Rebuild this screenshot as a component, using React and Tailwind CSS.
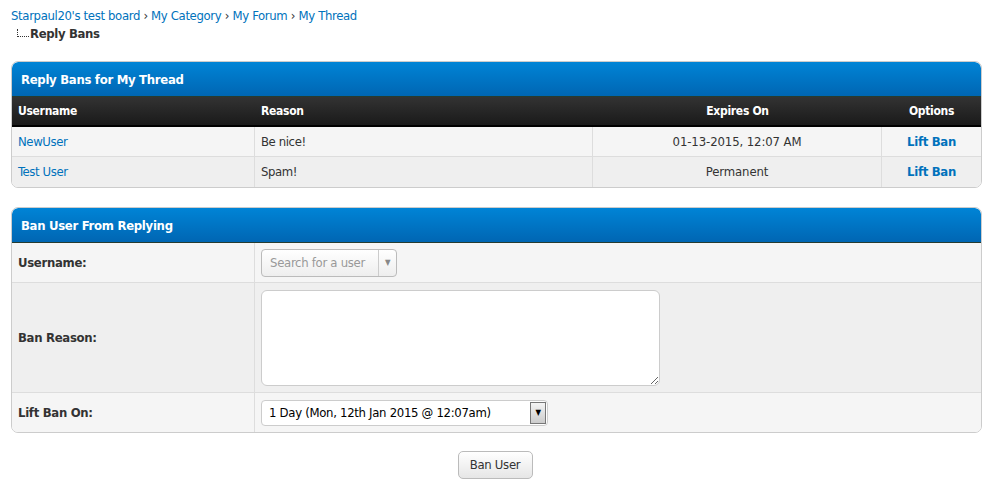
import React from 'react';

const font = { fontFamily: '"DejaVu Sans Condensed", "DejaVu Sans", Tahoma, sans-serif' };

function Crumbs() {
  return (
    <div className="px-[11px] pt-[7px] text-[13px] leading-[17px] tracking-[-0.35px]">
      <div className="text-[#0072bc]">
        <a href="#">Starpaul20's test board</a>
        <span className="text-[#333]"> › </span>
        <a href="#">My Category</a>
        <span className="text-[#333]"> › </span>
        <a href="#">My Forum</a>
        <span className="text-[#333]"> › </span>
        <a href="#">My Thread</a>
      </div>
      <div className="flex items-end mt-[1px]">
        <span className="ml-[6px] mb-[5px] h-[8px] w-[12px] border-l border-b border-dotted border-[#333]" />
        <span className="ml-[1px] font-bold text-[#333]">Reply Bans</span>
      </div>
    </div>
  );
}

function Thead({ children }) {
  return (
    <div className="h-[35px] flex items-center pt-[2px] px-[9px] rounded-t-[6px] bg-gradient-to-b from-[#0084d6] to-[#0066b3] border-b border-[#263c30] text-white font-bold text-[13px] tracking-[-0.3px]">
      {children}
    </div>
  );
}

const bans = [
  { user: 'NewUser', reason: 'Be nice!', expires: '01-13-2015, 12:07 AM', bg: 'bg-[#f5f5f5]' },
  { user: 'Test User', reason: 'Spam!', expires: 'Permanent', bg: 'bg-[#efefef]' },
];

export default function App() {
  return (
    <div className="min-h-[488px] bg-white text-[#333]" style={font}>
      <Crumbs />

      <div className="mx-[11px] mt-[19px] border border-[#ccc] rounded-[7px] overflow-hidden">
        <Thead>Reply Bans for My Thread</Thead>
        <div className="grid grid-cols-[243px_338px_289px_1fr] h-[30px] items-center bg-gradient-to-b from-[#333] to-[#1a1a1a] border-b-2 border-black text-white font-bold text-[12px] tracking-[-0.3px]">
          <div className="pl-[6px]">Username</div>
          <div className="pl-[6px]">Reason</div>
          <div className="text-center">Expires On</div>
          <div className="text-center">Options</div>
        </div>
        {bans.map((b, i) => (
          <div key={b.user} className={`grid grid-cols-[243px_338px_289px_1fr] h-[30px] text-[13px] ${b.bg} ${i === 0 ? 'border-b border-[#ddd]' : ''}`}>
            <div className="pl-[6px] flex items-center border-r border-[#ddd] text-[#0072bc] tracking-[-0.4px]">{b.user}</div>
            <div className="pl-[6px] flex items-center border-r border-[#ddd] tracking-[-0.4px]">{b.reason}</div>
            <div className="flex items-center justify-center border-r border-[#ddd] tracking-[-0.1px]">{b.expires}</div>
            <div className="flex items-center justify-center font-bold text-[#0072bc] tracking-[-0.3px]">Lift Ban</div>
          </div>
        ))}
      </div>

      <div className="mx-[11px] mt-[19px] border border-[#ccc] rounded-[7px] overflow-hidden">
        <Thead>Ban User From Replying</Thead>
        <div className="grid grid-cols-[243px_1fr] text-[13px] tracking-[-0.3px]">
          <div className="h-[40px] pl-[6px] flex items-center font-bold bg-[#f5f5f5] border-r border-b border-[#ddd]">Username:</div>
          <div className="h-[40px] pl-[6px] flex items-center bg-[#f5f5f5] border-b border-[#ddd]">
            <div className="h-[28px] w-[136px] flex rounded-[4px] border border-[#bbb] bg-gradient-to-b from-white to-[#eee]">
              <span className="flex-1 flex items-center pl-[8px] text-[#999]">Search for a user</span>
              <span className="w-[18px] flex items-center justify-center border-l border-[#ccc] text-[#888] text-[8px]">▼</span>
            </div>
          </div>

          <div className="h-[110px] pl-[6px] flex items-center font-bold bg-[#efefef] border-r border-b border-[#ddd]">Ban Reason:</div>
          <div className="h-[110px] pl-[6px] flex items-center bg-[#efefef] border-b border-[#ddd]">
            <textarea className="w-[399px] h-[96px] rounded-[6px] border border-[#ccc] bg-white resize-y" />
          </div>

          <div className="h-[39px] pl-[6px] flex items-center font-bold bg-[#f5f5f5] border-r border-[#ddd]">Lift Ban On:</div>
          <div className="h-[39px] pl-[6px] flex items-center bg-[#f5f5f5]">
            <div className="h-[26px] w-[287px] flex rounded-[4px] border border-[#ccc] bg-white">
              <span className="flex-1 flex items-center pl-[7px] text-black">1 Day (Mon, 12th Jan 2015 @ 12:07am)</span>
              <span className="w-[16px] my-[1px] mr-[1px] flex items-center justify-center border border-[#777] bg-gradient-to-b from-[#f4f4f4] to-[#ccc] text-black text-[8px]">▼</span>
            </div>
          </div>
        </div>
      </div>

      <div className="flex justify-center mt-[18px] pb-[10px]">
        <button className="h-[28px] w-[75px] ml-[-3px] rounded-[5px] border border-[#bbb] bg-gradient-to-b from-white to-[#e6e6e6] text-[13px] text-[#333] tracking-[-0.3px]">
          Ban User
        </button>
      </div>
    </div>
  );
}
